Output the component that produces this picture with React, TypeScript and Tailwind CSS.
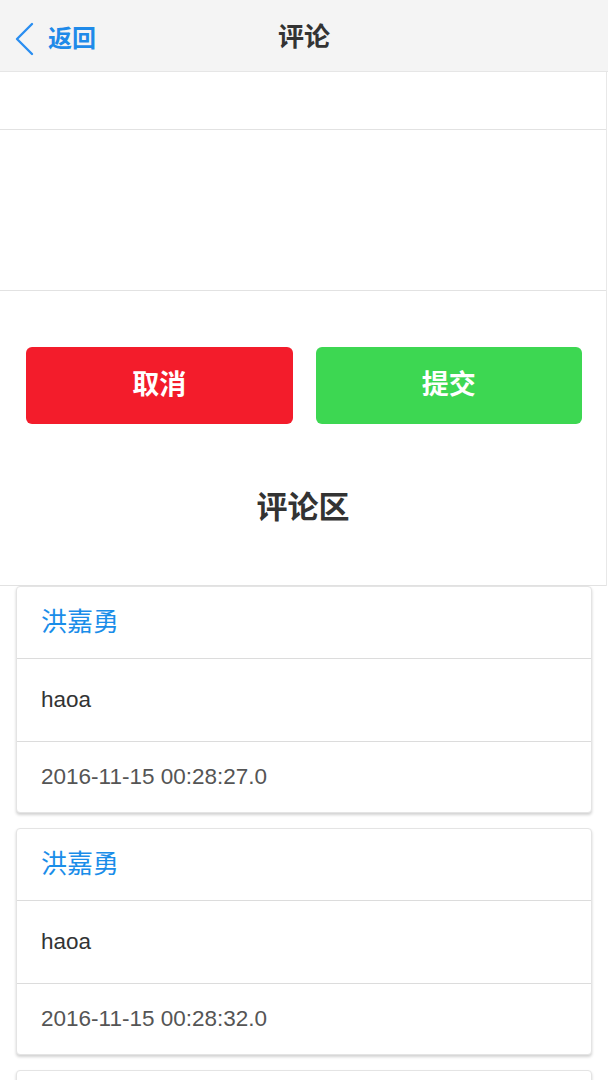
import React from "react";

const comments = [
  { name: "洪嘉勇", text: "haoa", time: "2016-11-15 00:28:27.0" },
  { name: "洪嘉勇", text: "haoa", time: "2016-11-15 00:28:32.0" },
];

function CommentCard({ name, text, time }: { name: string; text: string; time: string }) {
  return (
    <div className="mx-4 bg-white rounded-sm border border-[#e4e4e4] shadow-[0_2px_3px_rgba(0,0,0,0.18)]">
      <div className="h-[72px] flex items-center px-6 border-b border-[#dcdcdc]">
        <span className="text-[26px] text-[#1a8de9]">{name}</span>
      </div>
      <div className="h-[83px] flex items-center px-6 border-b border-[#dcdcdc]">
        <span className="text-[22.5px] text-[#333]">{text}</span>
      </div>
      <div className="h-[70px] flex items-center px-6">
        <span className="text-[22.5px] text-[#555]">{time}</span>
      </div>
    </div>
  );
}

export default function App() {
  return (
    <div
      className="w-[608px] h-[1080px] overflow-hidden bg-white"
      style={{ fontFamily: '"Liberation Sans", "Noto Sans CJK SC", sans-serif' }}
    >
      {/* header */}
      <div className="relative h-[72px] bg-[#f4f4f4] border-b border-[#e6e6e6] flex items-center justify-center pt-[3px]">
        <div className="absolute left-[14px] top-[22px] flex items-center gap-[14px]">
          <svg width="20" height="34" viewBox="0 0 20 34" fill="none">
            <path d="M18 2 L3 17 L18 32" stroke="#2a8ef0" strokeWidth="2.4" strokeLinecap="round" strokeLinejoin="round" />
          </svg>
          <span className="text-[24px] font-bold text-[#1f8ae9] leading-none">返回</span>
        </div>
        <span className="text-[26px] font-bold text-[#333] leading-none">评论</span>
      </div>

      {/* form */}
      <div className="w-[607px] border-r border-[#e8e8e8]">
        <div className="h-[58px] border-b border-[#e2e2e2]" />
        <div className="h-[161px] border-b border-[#e2e2e2]" />
        <div className="h-[295px] border-b border-[#e2e2e2] flex flex-col">
          <div className="flex gap-[23px] pl-[26px] pr-[24px] pt-[56px]">
            <button className="flex-1 h-[77px] rounded-md bg-[#f31c2b] text-white text-[27px] font-bold">取消</button>
            <button className="flex-1 h-[77px] rounded-md bg-[#3dd752] text-white text-[27px] font-bold">提交</button>
          </div>
          <div className="flex justify-center pt-[68px]">
            <span className="text-[31px] font-bold text-[#333] leading-none">评论区</span>
          </div>
        </div>
      </div>

      {/* comments */}
      <div className="flex flex-col gap-[15px]">
        {comments.map((c, i) => (
          <CommentCard key={i} {...c} />
        ))}
        <div className="mx-4 h-[72px] bg-white rounded-sm border border-[#e4e4e4] shadow-[0_2px_3px_rgba(0,0,0,0.18)]" />
      </div>
    </div>
  );
}
